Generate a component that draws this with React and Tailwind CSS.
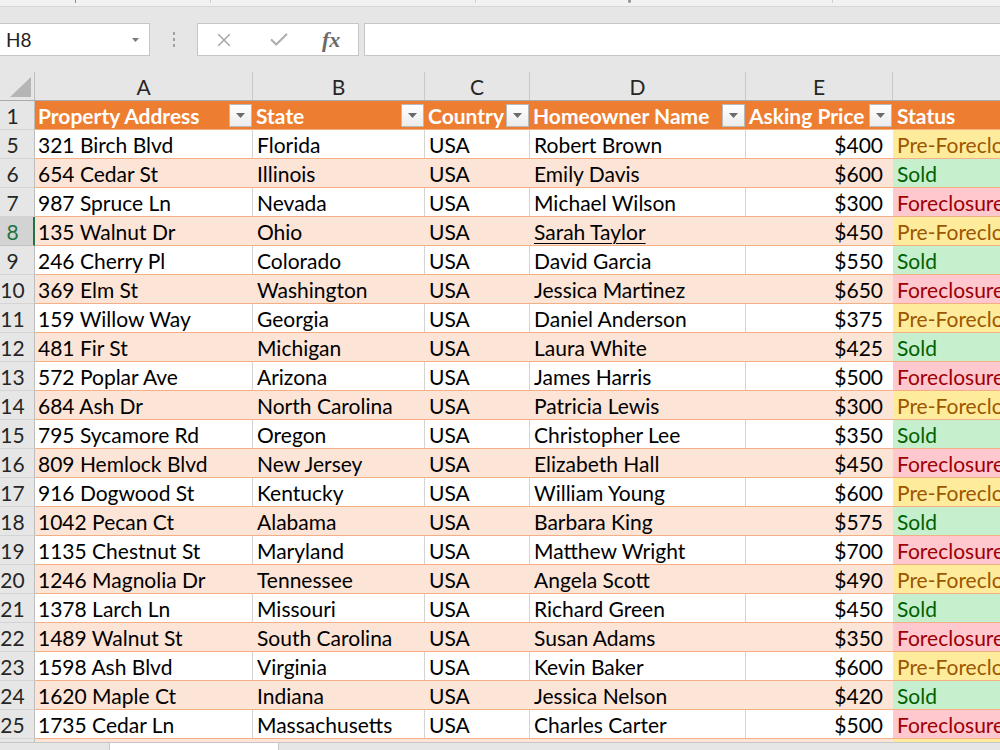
import { X, Check } from 'lucide-react'

const FONT = { fontFamily: 'Lato, "Open Sans", sans-serif' }

// column widths, px (A..E); F takes what is left
const COLS = [
  { key: 'A', w: 'w-[218px]', title: 'Property Address' },
  { key: 'B', w: 'w-[172px]', title: 'State' },
  { key: 'C', w: 'w-[105px]', title: 'Country' },
  { key: 'D', w: 'w-[216px]', title: 'Homeowner Name' },
  { key: 'E', w: 'w-[147px]', title: 'Asking Price' },
]

const STATUS = {
  pre: { label: 'Pre-Foreclosure', cls: 'bg-[#ffeb9c] text-[#9c5700]' },
  sold: { label: 'Sold', cls: 'bg-[#c6efce] text-[#006100]' },
  fore: { label: 'Foreclosure', cls: 'bg-[#ffc7ce] text-[#9c0006]' },
}

const rows = [
  [5, '321 Birch Blvd', 'Florida', 'Robert Brown', '$400', 'pre'],
  [6, '654 Cedar St', 'Illinois', 'Emily Davis', '$600', 'sold'],
  [7, '987 Spruce Ln', 'Nevada', 'Michael Wilson', '$300', 'fore'],
  [8, '135 Walnut Dr', 'Ohio', 'Sarah Taylor', '$450', 'pre'],
  [9, '246 Cherry Pl', 'Colorado', 'David Garcia', '$550', 'sold'],
  [10, '369 Elm St', 'Washington', 'Jessica Martinez', '$650', 'fore'],
  [11, '159 Willow Way', 'Georgia', 'Daniel Anderson', '$375', 'pre'],
  [12, '481 Fir St', 'Michigan', 'Laura White', '$425', 'sold'],
  [13, '572 Poplar Ave', 'Arizona', 'James Harris', '$500', 'fore'],
  [14, '684 Ash Dr', 'North Carolina', 'Patricia Lewis', '$300', 'pre'],
  [15, '795 Sycamore Rd', 'Oregon', 'Christopher Lee', '$350', 'sold'],
  [16, '809 Hemlock Blvd', 'New Jersey', 'Elizabeth Hall', '$450', 'fore'],
  [17, '916 Dogwood St', 'Kentucky', 'William Young', '$600', 'pre'],
  [18, '1042 Pecan Ct', 'Alabama', 'Barbara King', '$575', 'sold'],
  [19, '1135 Chestnut St', 'Maryland', 'Matthew Wright', '$700', 'fore'],
  [20, '1246 Magnolia Dr', 'Tennessee', 'Angela Scott', '$490', 'pre'],
  [21, '1378 Larch Ln', 'Missouri', 'Richard Green', '$450', 'sold'],
  [22, '1489 Walnut St', 'South Carolina', 'Susan Adams', '$350', 'fore'],
  [23, '1598 Ash Blvd', 'Virginia', 'Kevin Baker', '$600', 'pre'],
  [24, '1620 Maple Ct', 'Indiana', 'Jessica Nelson', '$420', 'sold'],
  [25, '1735 Cedar Ln', 'Massachusetts', 'Charles Carter', '$500', 'fore'],
]

function FilterButton() {
  return (
    <div className="ml-auto mr-px flex h-[23px] w-[23px] shrink-0 items-center justify-center border border-[#b9b9b9] bg-gradient-to-b from-white to-[#ececec]">
      <svg width="9" height="5" viewBox="0 0 9 5">
        <path d="M0 0h9L4.5 5z" fill="#6b6b6b" />
      </svg>
    </div>
  )
}

function FormulaBar() {
  return (
    <div className="mt-[16px] flex h-[33px] items-stretch">
      <div className="flex w-[150px] items-center border border-l-0 border-[#c6c6c6] bg-white pl-[6px] pr-[10px] pt-px">
        <span className="text-[19px] text-[#222]">H8</span>
        <svg className="ml-auto" width="7" height="4" viewBox="0 0 7 4">
          <path d="M0 0h7L3.5 4z" fill="#7a7a7a" />
        </svg>
      </div>
      <div className="flex w-[47px] flex-col items-center justify-center gap-[3px]">
        <span className="h-[3px] w-[2px] bg-[#a0a0a0]" />
        <span className="h-[3px] w-[2px] bg-[#a0a0a0]" />
        <span className="h-[3px] w-[2px] bg-[#a0a0a0]" />
      </div>
      <div className="flex w-[162px] items-center border border-[#c6c6c6] bg-white">
        <X className="ml-[15px]" size={22} strokeWidth={1.6} color="#a8a8a8" />
        <Check className="ml-[33px]" size={22} strokeWidth={2.4} color="#b0b0b0" />
        <span
          className="ml-[32px] text-[22px] font-bold italic text-[#6a6a6a]"
          style={{ fontFamily: '"Liberation Serif", serif' }}
        >
          fx
        </span>
      </div>
      <div className="ml-[5px] flex-1 border border-r-0 border-[#c6c6c6] bg-white" />
    </div>
  )
}

function ColumnHeaders() {
  return (
    <div className="mt-[16px] flex h-[29px] border-b border-[#ababab] text-[21px] text-[#262626]">
      <div className="flex w-[35px] shrink-0 items-end justify-end border-r border-[#bdbdbd] pb-[3px] pr-[3px]">
        <svg width="21" height="20" viewBox="0 0 21 20">
          <path d="M21 0V20H0z" fill="#b5b5b5" />
        </svg>
      </div>
      {COLS.map((c) => (
        <div key={c.key} className={`${c.w} flex shrink-0 items-center justify-center border-r border-[#c9c9c9] pt-[2px]`}>
          {c.key}
        </div>
      ))}
      <div className="flex-1" />
    </div>
  )
}

function RowHeader({ n, active }) {
  return (
    <div
      className={
        active
          ? 'flex w-[35px] shrink-0 items-center border-b border-r-2 border-b-[#c3c3c3] border-r-[#217346] bg-[#d3d3d3] pr-[8px] pt-[2px] text-[#217346]'
          : 'flex w-[35px] shrink-0 items-center border-b border-r border-b-[#d4d4d4] border-r-[#bdbdbd] bg-[#e6e6e6] pr-[9px] pt-[2px] text-[#262626]'
      }
    >
      <span className="w-full text-center">{n}</span>
    </div>
  )
}

function DataRow({ row }) {
  const [n, addr, state, name, price, status] = row
  const banded = n % 2 === 0
  const grid = banded ? '' : 'border-r border-r-[#d4d4d4]'
  const st = STATUS[status]
  return (
    <div className="flex h-[29px] text-[21px]">
      <RowHeader n={n} active={n === 8} />
      <div className={`flex flex-1 border-b border-[#f4b084] ${banded ? 'bg-[#fce4d6]' : 'bg-white'} text-black`}>
        <div className={`w-[218px] shrink-0 overflow-hidden whitespace-nowrap pl-[3px] pt-[2px] leading-[26px] ${grid}`}>{addr}</div>
        <div className={`w-[172px] shrink-0 overflow-hidden whitespace-nowrap pl-[4px] pt-[2px] leading-[26px] ${grid}`}>{state}</div>
        <div className={`w-[105px] shrink-0 overflow-hidden whitespace-nowrap pl-[4px] pt-[2px] leading-[26px] ${grid}`}>USA</div>
        <div className={`w-[216px] shrink-0 overflow-hidden whitespace-nowrap pl-[4px] pt-[2px] leading-[26px] ${grid}`}>
          <span className={n === 8 ? 'underline decoration-1 underline-offset-[3px]' : ''}>{name}</span>
        </div>
        <div className="w-[147px] shrink-0 whitespace-nowrap pr-[10px] pt-[2px] text-right leading-[26px]">{price}</div>
        <div className={`flex-1 overflow-hidden whitespace-nowrap pl-[4px] pt-[2px] leading-[26px] ${st.cls}`}>{st.label}</div>
      </div>
    </div>
  )
}

export default function App() {
  return (
    <div className="flex h-[750px] w-[1000px] flex-col overflow-hidden bg-[#e6e6e6]" style={FONT}>
      {/* ribbon edge, cut off */}
      <div className="relative h-[7px] shrink-0 border-b border-[#d6d6d6] bg-[#f2f2f2]">
        <span className="absolute left-[75px] top-0 h-[3px] w-px bg-[#8a8a8a]" />
        <span className="absolute left-[210px] top-0 h-[3px] w-px bg-[#cfcfcf]" />
        <span className="absolute left-[475px] top-0 h-[3px] w-px bg-[#cfcfcf]" />
        <span className="absolute left-[628px] top-0 h-[3px] w-[3px] rounded-b bg-[#9a9a9a]" />
        <span className="absolute left-[832px] top-0 h-[3px] w-px bg-[#cfcfcf]" />
      </div>

      <FormulaBar />
      <ColumnHeaders />

      {/* header row of the table */}
      <div className="flex h-[29px] shrink-0 text-[21px]">
        <RowHeader n={1} />
        <div className="flex flex-1 border-b border-[#f4b084] bg-[#ed7d31] font-bold text-white">
          {COLS.map((c) => (
            <div key={c.key} className={`${c.w} flex shrink-0 items-center pl-[3px]`}>
              <span className="whitespace-nowrap pt-[2px]">{c.title}</span>
              <FilterButton />
            </div>
          ))}
          <div className="flex flex-1 items-center pl-[4px] pt-[2px]">Status</div>
        </div>
      </div>

      {rows.map((r) => (
        <DataRow key={r[0]} row={r} />
      ))}

      {/* row 26, cut off */}
      <div className="flex h-[3px] shrink-0">
        <div className="w-[35px] border-r border-[#bdbdbd] bg-[#e6e6e6]" />
        <div className="w-[858px] bg-[#fce4d6]" />
        <div className="flex-1 bg-[#ffeb9c]" />
      </div>

      {/* sheet tabs */}
      <div className="flex flex-1 border-t border-[#c6c6c6] bg-[#e6e6e6]">
        <div className="w-[110px] border-r border-[#c6c6c6]" />
        <div className="w-[168px] bg-white" />
        <div className="flex-1 border-l border-[#c6c6c6]" />
      </div>
    </div>
  )
}
